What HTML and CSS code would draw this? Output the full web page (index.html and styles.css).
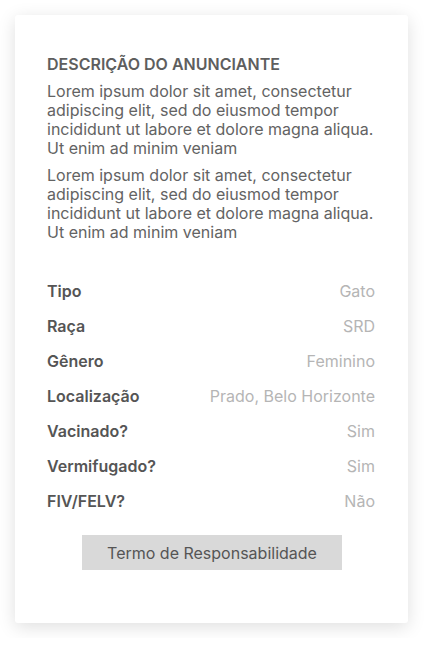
FILE: index.html
```html
<!DOCTYPE html>
<html lang="pt-BR">
<head>
<meta charset="utf-8">
<link rel="stylesheet" href="styles.css">
</head>
<body>
<div class="card">
  <section class="desc">
    <h2 class="desc-title">DESCRIÇÃO DO ANUNCIANTE</h2>
    <p class="desc-text">Lorem ipsum dolor sit amet, consectetur adipiscing elit, sed do eiusmod tempor incididunt ut labore et dolore magna aliqua. Ut enim ad minim veniam</p>
    <p class="desc-text">Lorem ipsum dolor sit amet, consectetur adipiscing elit, sed do eiusmod tempor incididunt ut labore et dolore magna aliqua. Ut enim ad minim veniam</p>
  </section>
  <dl class="info">
    <div class="row"><dt>Tipo</dt><dd>Gato</dd></div>
    <div class="row"><dt>Raça</dt><dd>SRD</dd></div>
    <div class="row"><dt>Gênero</dt><dd>Feminino</dd></div>
    <div class="row"><dt>Localização</dt><dd>Prado, Belo Horizonte</dd></div>
    <div class="row"><dt>Vacinado?</dt><dd>Sim</dd></div>
    <div class="row"><dt>Vermifugado?</dt><dd>Sim</dd></div>
    <div class="row"><dt>FIV/FELV?</dt><dd>Não</dd></div>
  </dl>
  <div class="actions">
    <button class="btn">Termo de Responsabilidade</button>
  </div>
</div>
</body>
</html>
```
FILE: styles.css
```css
* { box-sizing: border-box; }
html, body { margin: 0; padding: 0; background: #ffffff; }
body {
  font-family: Inter, "Noto Sans", sans-serif;
  padding: 15px;
}
.card {
  width: 393px;
  background: #fff;
  border-radius: 3px;
  box-shadow: 0 4px 18px rgba(0,0,0,0.13);
  padding: 40px 33px 53px 32px;
}
.desc {
  display: flex;
  flex-direction: column;
  gap: 8px;
}
.desc-title {
  margin: 0;
  font-size: 16px;
  line-height: 19px;
  font-weight: 600;
  color: #5e5e5e;
}
.desc-text {
  margin: 0;
  font-size: 16px;
  line-height: 19px;
  color: #636363;
}
.info {
  margin: 40px 0 0;
  display: flex;
  flex-direction: column;
  gap: 16px;
}
.row {
  display: flex;
  justify-content: space-between;
  font-size: 16px;
  line-height: 19px;
}
.row dt { font-weight: 600; color: #555; }
.row dd { margin: 0; color: #b5b5b5; }
.actions {
  display: flex;
  justify-content: center;
  margin-top: 24px;
  padding-left: 2px;
}
.btn {
  width: 260px;
  height: 35px;
  border: none;
  background: #d9d9d9;
  font-family: inherit;
  font-size: 16px;
  color: #555;
  padding: 0;
}
```
